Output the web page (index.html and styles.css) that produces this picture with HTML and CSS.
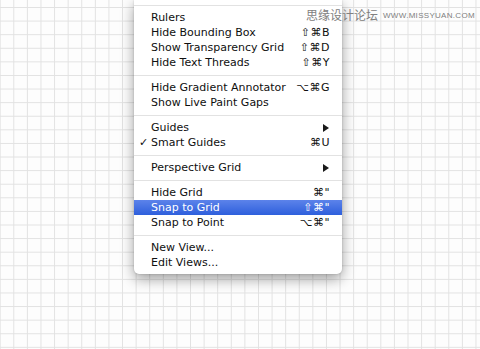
FILE: index.html
```html
<!DOCTYPE html>
<html lang="en">
<head>
    <meta charset="UTF-8">
    <meta name="viewport" content="width=device-width, initial-scale=1.0">
    <title>View Menu</title>
    <link rel="stylesheet" href="styles.css">
</head>
<body>
    <div class="canvas">
        <div class="watermark">
            <span class="wm-cn">思缘设计论坛</span>
            <span class="wm-en">WWW.MISSYUAN.COM</span>
        </div>

        <div class="menu">
            <div class="sep"></div>
            <div class="item"><span class="label">Rulers</span></div>
            <div class="item"><span class="label">Hide Bounding Box</span><span class="key">⇧⌘B</span></div>
            <div class="item"><span class="label">Show Transparency Grid</span><span class="key">⇧⌘D</span></div>
            <div class="item"><span class="label">Hide Text Threads</span><span class="key">⇧⌘Y</span></div>
            <div class="sep"></div>
            <div class="item"><span class="label">Hide Gradient Annotator</span><span class="key">⌥⌘G</span></div>
            <div class="item"><span class="label">Show Live Paint Gaps</span></div>
            <div class="sep"></div>
            <div class="item"><span class="label">Guides</span><span class="arrow"></span></div>
            <div class="item"><span class="check">✓</span><span class="label">Smart Guides</span><span class="key">⌘U</span></div>
            <div class="sep"></div>
            <div class="item"><span class="label">Perspective Grid</span><span class="arrow"></span></div>
            <div class="sep"></div>
            <div class="item"><span class="label">Hide Grid</span><span class="key">⌘"</span></div>
            <div class="item active"><span class="label">Snap to Grid</span><span class="key">⇧⌘"</span></div>
            <div class="item"><span class="label">Snap to Point</span><span class="key">⌥⌘"</span></div>
            <div class="sep"></div>
            <div class="item"><span class="label">New View...</span></div>
            <div class="item"><span class="label">Edit Views...</span></div>
        </div>
    </div>
</body>
</html>
```

FILE: styles.css
```css
* { margin: 0; padding: 0; box-sizing: border-box; }
body {
    width: 480px;
    height: 349px;
    overflow: hidden;
    background: #fff;
}
.canvas {
    position: relative;
    width: 480px;
    height: 349px;
    background-color: #fdfdfd;
    background-image:
        linear-gradient(to right, #e2e2e2 1px, transparent 1px),
        linear-gradient(to bottom, #e2e2e2 1px, transparent 1px);
    background-size: 13.6px 13.6px;
    background-position: -0.3px 7px;
}
.menu {
    position: absolute;
    left: 134px;
    top: 0;
    width: 208px;
    padding-bottom: 4px;
    background: #fff;
    border-radius: 0 0 5px 5px;
    box-shadow: 0 5px 14px rgba(0, 0, 0, 0.38), 0 0 2px rgba(0, 0, 0, 0.2);
    font-family: 'DejaVu Sans', sans-serif;
    font-size: 11px;
    color: #0f0f0f;
}
.item {
    position: relative;
    display: flex;
    align-items: center;
    height: 15px;
    padding: 0 12px 0 17px;
    line-height: 15px;
    white-space: nowrap;
}
.item .label { flex: 1; }
.item .key { letter-spacing: 0.5px; }
.item .check {
    position: absolute;
    left: 5px;
}
.item .arrow {
    width: 0;
    height: 0;
    margin-right: 1px;
    border-top: 4px solid transparent;
    border-bottom: 4px solid transparent;
    border-left: 6px solid #1a1a1a;
}
.item.active {
    background: linear-gradient(to bottom, #5c83ea, #2e5fdc);
    color: #fff;
}
.sep {
    height: 1px;
    margin: 5px 0 4px;
    background: #e2e2e2;
}
.watermark {
    position: absolute;
    left: 306px;
    top: 7px;
    display: flex;
    align-items: center;
    gap: 5px;
    z-index: 2;
    color: #808080;
}
.wm-cn {
    font-family: 'Noto Sans CJK SC', sans-serif;
    font-size: 12px;
    line-height: 16px;
}
.wm-en {
    font-family: 'Liberation Sans', sans-serif;
    font-size: 8px;
    letter-spacing: 0.3px;
}
```
